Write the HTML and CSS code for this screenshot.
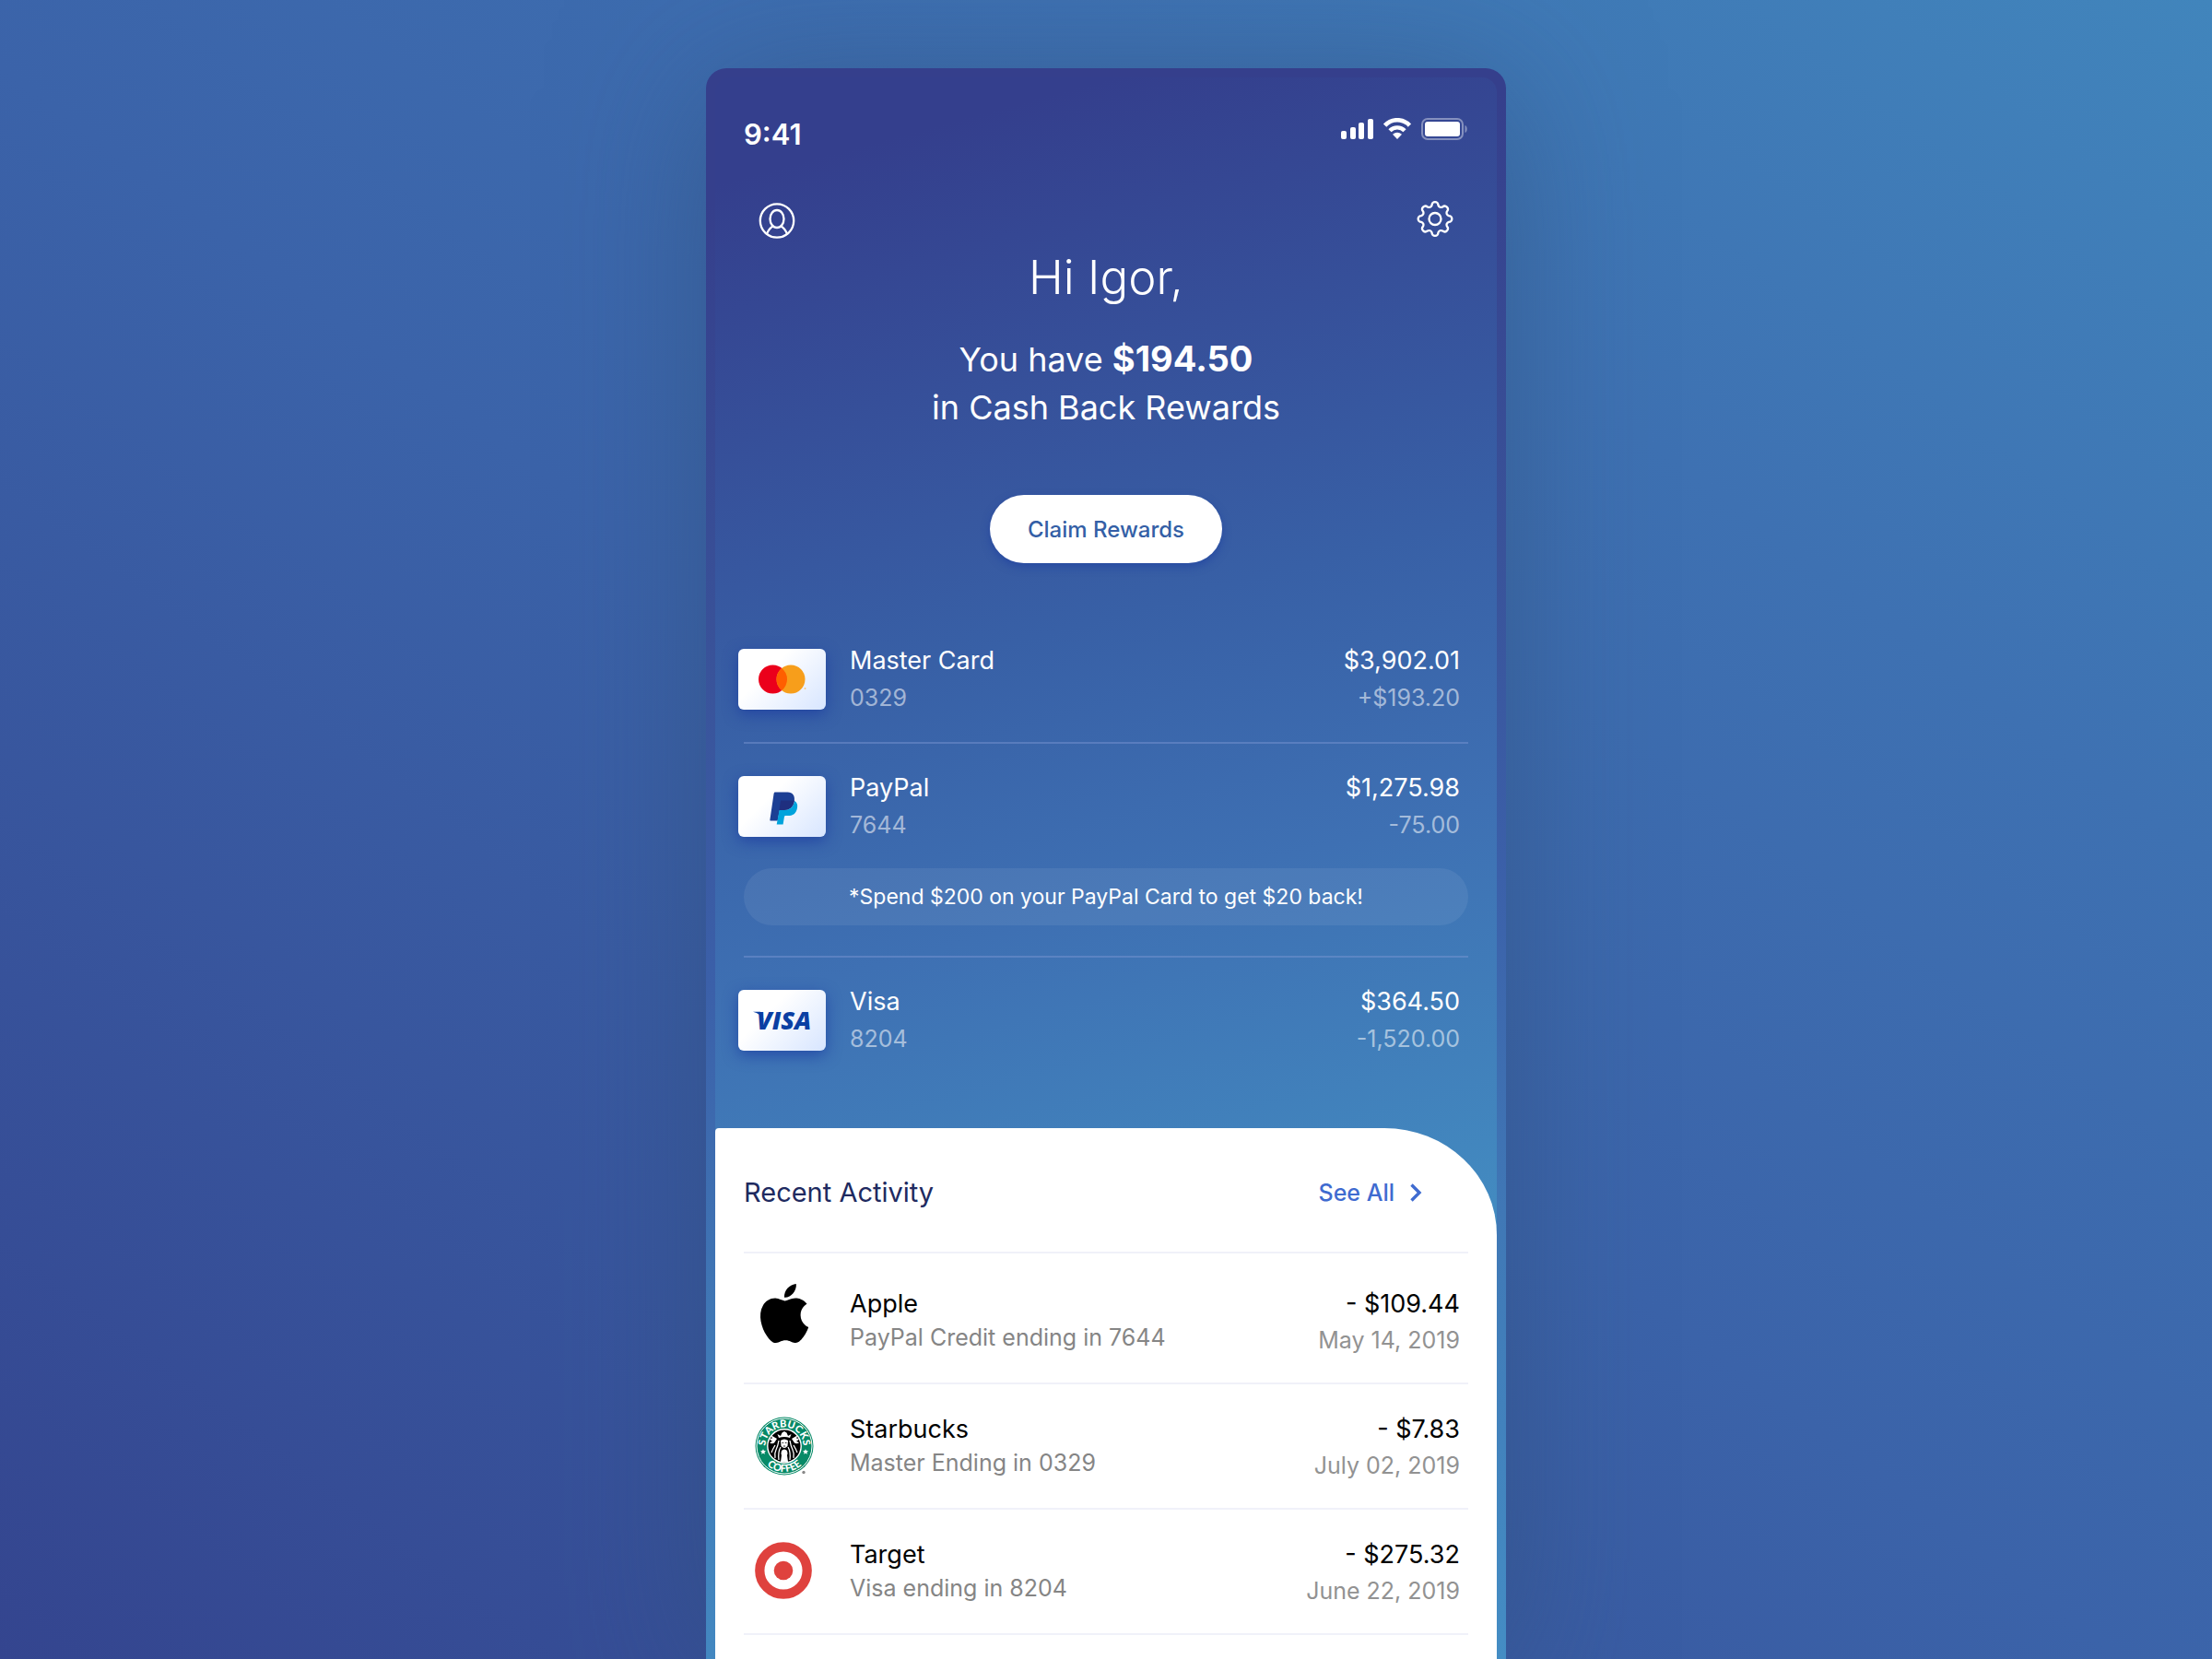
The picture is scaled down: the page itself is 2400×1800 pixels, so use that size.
FILE: index.html
```html
<!DOCTYPE html>
<html lang="en">
<head>
<meta charset="utf-8">
<meta name="viewport" content="width=device-width, initial-scale=1">
<title>Cash Back Rewards</title>
<link rel="stylesheet" href="styles.css">
</head>
<body>
<main class="phone">
  <div class="screen">
    <header class="top">
      <div class="status">
        <span class="clock">9:41</span>
        <svg class="status-icons" width="138" height="24" viewBox="0 0 138 24" fill="#fff" aria-hidden="true">
          <rect x="0" y="14" width="6" height="9" rx="2"/>
          <rect x="10" y="10" width="6" height="13" rx="2"/>
          <rect x="19" y="5" width="6" height="18" rx="2"/>
          <rect x="29" y="1" width="6" height="22" rx="2"/>
          <path d="M47.600 8.100A18.200 18.200 0 0 1 74.400 8.100" fill="none" stroke="#fff" stroke-width="4.600"/>
          <path d="M53 13.800A11 11 0 0 1 69 13.800" fill="none" stroke="#fff" stroke-width="4.400"/>
          <path d="M61 23l-5-5.200q5-4.200 10 0z"/>
          <rect x="88" y="1" width="44" height="22" rx="6" fill="none" stroke="#fff" stroke-width="2" opacity=".4"/>
          <rect x="91" y="4" width="38" height="16" rx="3"/>
          <path d="M134.500 8c3 1 3 7 0 8z" opacity=".4"/>
        </svg>
      </div>
      <div class="toolbar">
        <button class="icon-button" type="button" aria-label="Profile">
          <svg width="40" height="40" viewBox="0 0 40 40" fill="none" stroke="#fff" stroke-width="2.300">
            <circle cx="20" cy="21.500" r="18.200"/>
            <ellipse cx="20" cy="19.500" rx="7.500" ry="9.500"/>
            <path d="M9 35.700Q11.500 29.800 16 27.300M31 35.700Q28.500 29.800 24 27.300"/>
          </svg>
        </button>
        <button class="icon-button" type="button" aria-label="Settings">
          <svg width="40" height="40" viewBox="-20 -19.500 40 40" fill="none" stroke="#fff" stroke-width="2.300">
            <path d="M14.910-3.440A3.440 3.440 0 0 1 14.910 3.440A3.200 3.200 0 0 0 12.970 8.110A3.440 3.440 0 0 1 8.110 12.970A3.200 3.200 0 0 0 3.440 14.910A3.440 3.440 0 0 1-3.440 14.910A3.200 3.200 0 0 0-8.110 12.970A3.440 3.440 0 0 1-12.970 8.110A3.200 3.200 0 0 0-14.910 3.440A3.440 3.440 0 0 1-14.910-3.440A3.200 3.200 0 0 0-12.970-8.110A3.440 3.440 0 0 1-8.110-12.970A3.200 3.200 0 0 0-3.440-14.910A3.440 3.440 0 0 1 3.440-14.910A3.200 3.200 0 0 0 8.110-12.970A3.440 3.440 0 0 1 12.970-8.110A3.200 3.200 0 0 0 14.910-3.440z"/>
            <circle r="6.500"/>
          </svg>
        </button>
      </div>
      <h1 class="greeting">Hi Igor,</h1>
      <p class="summary">You have <strong>$194.50</strong><br>in Cash Back Rewards</p>
      <button class="claim" type="button">Claim Rewards</button>
    </header>

    <ul class="accounts">
      <li class="account">
        <div class="account-row">
          <svg class="card" width="95" height="66" viewBox="0 0 95 66" aria-hidden="true">
            <circle cx="37.500" cy="33" r="15.500" fill="#eb001b"/>
            <circle cx="57" cy="33" r="15.500" fill="#f79e1b"/>
            <path d="M47.250 20.950a15.500 15.500 0 0 1 0 24.100a15.500 15.500 0 0 1 0-24.100z" fill="#ff5f00"/>
            <circle cx="72.500" cy="43" r="1" fill="#f9c77c"/>
          </svg>
          <div class="info"><div class="name">Master Card</div><div class="detail">0329</div></div>
          <div class="figures"><div class="name">$3,902.01</div><div class="detail">+$193.20</div></div>
        </div>
      </li>
      <li class="account">
        <div class="account-row">
          <svg class="card" width="95" height="66" viewBox="0 0 95 66" aria-hidden="true">
            <path d="M40 17.500h13.500c5.500 0 8.300 4 7.300 9.500-1.200 7-5.300 10-11.500 10h-4.300l-2.300 11.500h-7.700q-.8 0-.6-1l4.200-28.600q.3-1.400 1.400-1.400z" fill="#1c3f94"/>
            <path d="M61 27c2.600 1.400 3.700 4 3 7.400-1.100 6.200-4.600 8.600-10.500 8.600h-2.200q-1.100 0-1.300 1l-1.400 8.600h-6.900l2.900-15.600h4.700c6.200 0 10.500-3 11.700-10z" fill="#00a3dc"/>
            <path d="M46 26.500h15q-1.800 10.500-11.500 10.500h-5z" fill="#1f2f7f"/>
          </svg>
          <div class="info"><div class="name">PayPal</div><div class="detail">7644</div></div>
          <div class="figures"><div class="name">$1,275.98</div><div class="detail">-75.00</div></div>
        </div>
        <p class="promo">*Spend $200 on your PayPal Card to get $20 back!</p>
      </li>
      <li class="account">
        <div class="account-row">
          <svg class="card" width="95" height="66" viewBox="0 0 95 66" aria-hidden="true">
            <text class="visa-mark" x="20" y="43">VISA</text>
            <path d="M16 23.700h8l4 9q-4-7-12-9z" fill="#0a3fa3"/>
          </svg>
          <div class="info"><div class="name">Visa</div><div class="detail">8204</div></div>
          <div class="figures"><div class="name">$364.50</div><div class="detail">-1,520.00</div></div>
        </div>
      </li>
    </ul>

    <section class="sheet">
      <div class="sheet-head">
        <h2 class="sheet-title">Recent Activity</h2>
        <a class="see-all" href="#">See All
          <svg width="14" height="20" viewBox="0 0 14 20" fill="none" stroke="#3f6bd0" stroke-width="3.400" aria-hidden="true"><path d="M2.500 1.500L11 10l-8.500 8.500"/></svg>
        </a>
      </div>
      <ul class="activity">
        <li class="entry entry-first">
          <svg class="logo" width="88" height="74" viewBox="0 0 88 74" aria-hidden="true">
            <path transform="translate(12.100 -3) scale(2.667)" d="M12.152 6.896c-.948 0-2.415-1.078-3.960-1.040-2.040.027-3.910 1.183-4.961 3.014-2.117 3.675-.546 9.103 1.519 12.090 1.013 1.454 2.208 3.090 3.792 3.039 1.520-.065 2.090-.987 3.935-.987 1.831 0 2.350.987 3.960.948 1.637-.026 2.676-1.480 3.676-2.948 1.156-1.688 1.636-3.325 1.662-3.415-.039-.013-3.182-1.221-3.220-4.857-.026-3.040 2.480-4.494 2.597-4.559-1.429-2.090-3.623-2.324-4.390-2.376-2-.156-3.675 1.090-4.610 1.090zM15.530 3.830c.843-1.012 1.400-2.427 1.245-3.830-1.207.052-2.662.805-3.532 1.818-.780.896-1.454 2.338-1.273 3.714 1.338.104 2.715-.688 3.559-1.701"/>
          </svg>
          <div class="info"><div class="name">Apple</div><div class="detail">PayPal Credit ending in 7644</div></div>
          <div class="figures"><div class="name">- $109.44</div><div class="detail date">May 14, 2019</div></div>
        </li>
        <li class="entry">
          <svg class="logo" width="88" height="74" viewBox="-44 -37 88 74" aria-hidden="true">
            <defs>
              <path id="ring-top" d="M-20.500 0A20.500 20.500 0 0 1 20.500 0"/>
              <path id="ring-bottom" d="M-28 0A28 28 0 0 0 28 0"/>
            </defs>
            <circle r="31.500" fill="#078a67"/>
            <circle r="30" fill="none" stroke="#fff" stroke-width="1"/>
            <circle r="18.200" fill="#000" stroke="#fff" stroke-width="1.400"/>
            <text class="ring-text"><textPath href="#ring-top" startOffset="50%">STARBUCKS</textPath></text>
            <text class="ring-text"><textPath href="#ring-bottom" startOffset="50%">COFFEE</textPath></text>
            <path id="star" d="M-23 3.200l.9 1.900 2.100.2-1.600 1.400.5 2-1.900-1-1.900 1 .5-2-1.600-1.400 2.100-.2z" fill="#fff"/>
            <use href="#star" x="46"/>
            <g fill="#fff">
              <path d="M-6-9l-1.500-4 3.500 2 1.500-3.500L0-16l2.500 1.500L4-11l3.500-2L6-9Q0-11-6-9z"/>
              <path d="M-4-6Q0-9 4-6L3.500 0Q0 4-3.500 0z"/>
              <path d="M-3 5Q0 2 3 5q1 3 0 5l1 7Q0 18-4 17l1-7q-1-2 0-5z"/>
              <path d="M-8-8l-6-3.500q0 2 1 3l-3 .5q1 2 3 2.500l-3 2q3 1.500 5 0zM8-8l6-3.500q0 2-1 3l3 .5q-1 2-3 2.500l3 2q-3 1.500-5 0z"/>
            </g>
            <path d="M-6-6Q-7 0-9 4t-1 9M-4 1Q-7 6-6 15M6-6Q7 0 9 4t1 9M4 1Q7 6 6 15M-10-1q-3 5-4 8M10-1q3 5 4 8" fill="none" stroke="#fff" stroke-width="1.300"/>
            <path d="M-2.500-3.500h1.700M.8-3.500h1.700M-1.200 0h2.400" stroke="#000" stroke-width=".8"/>
            <circle cx="21" cy="28.500" r="1.700" fill="#888"/>
          </svg>
          <div class="info"><div class="name">Starbucks</div><div class="detail">Master Ending in 0329</div></div>
          <div class="figures"><div class="name">- $7.83</div><div class="detail date">July 02, 2019</div></div>
        </li>
        <li class="entry">
          <svg class="logo" width="88" height="74" viewBox="0 0 88 74" aria-hidden="true">
            <circle cx="43" cy="36" r="25.700" fill="none" stroke="#df423e" stroke-width="10.300"/>
            <circle cx="43" cy="36" r="10.300" fill="#df423e"/>
          </svg>
          <div class="info"><div class="name">Target</div><div class="detail">Visa ending in 8204</div></div>
          <div class="figures"><div class="name">- $275.32</div><div class="detail date">June 22, 2019</div></div>
        </li>
      </ul>
    </section>
  </div>
</main>
</body>
</html>
```
FILE: styles.css
```css
* {
  box-sizing: border-box;
}

body {
  margin: 0;
  min-height: 100vh;
  padding-top: 74px;
  display: flex;
  flex-direction: column;
  align-items: center;
  overflow-x: hidden;
  font-family: Inter, "Liberation Sans", sans-serif;
  color: #fff;
  background: linear-gradient(to top right, #34458f, #3b63a9 48%, #3e71b2 74%, #4185bc);
}

h1,
h2,
p,
ul {
  margin: 0;
  padding: 0;
  font-weight: 400;
}

ul {
  list-style: none;
}

svg {
  display: block;
}

button {
  border: 0;
  padding: 0;
  font-family: inherit;
  cursor: pointer;
}

.phone {
  flex: 1;
  display: flex;
  width: 100%;
  max-width: 868px;
  padding: 10px 10px 0;
  border-radius: 22px 22px 0 0;
  background: linear-gradient(172deg, #353f8c 8%, #395299 34%, #3b60a9 54%, #4078b6 74%, #448dc4);
  box-shadow: 0 20px 160px rgba(48, 78, 120, .55);
}

.screen {
  flex: 1;
  display: flex;
  flex-direction: column;
  min-width: 0;
  border-radius: 16px 16px 0 0;
  background: linear-gradient(165deg, #343f8d 6%, #3860a6 36%, #3e70b3 52%, #438cc1 76%);
}

.top {
  display: flex;
  flex-direction: column;
  align-items: center;
  padding: 44px 31px 0;
}

.status {
  align-self: stretch;
  display: flex;
  justify-content: space-between;
  align-items: flex-start;
}

.clock {
  font-size: 31px;
  line-height: 36px;
  font-weight: 600;
}

.toolbar {
  align-self: stretch;
  display: flex;
  justify-content: space-between;
  margin-top: 54px;
  padding: 0 16px;
}

.icon-button {
  width: 40px;
  height: 40px;
  background: none;
}

.icon-button svg {
  overflow: visible;
}

.greeting {
  margin-top: 13px;
  font-size: 51px;
  line-height: 60px;
  font-weight: 300;
}

.summary {
  margin-top: 33px;
  font-size: 36px;
  line-height: 52px;
  text-align: center;
}

.summary strong {
  font-size: 38px;
  line-height: 36px;
  font-weight: 700;
}

.claim {
  width: 252px;
  height: 74px;
  margin-top: 69px;
  border-radius: 37px;
  font-size: 24px;
  font-weight: 500;
  color: #345fa6;
  background: #fff;
  box-shadow: 0 4px 10px rgba(28, 62, 160, .6);
}

.accounts {
  margin-top: 58px;
  padding: 0 31px 49px;
}

.account {
  padding: 28px 0;
}

.account + .account {
  border-top: 2px solid rgba(130, 155, 215, .42);
}

.account-row {
  display: grid;
  grid-template-columns: 115px 1fr auto;
  align-items: center;
  padding-right: 9px;
}

.card {
  margin-left: -6px;
  border-radius: 6px;
  background: linear-gradient(135deg, #fff 35%, #d7e5ff);
  box-shadow: 0 5px 16px rgba(24, 56, 160, .65);
}

.visa-mark {
  font: italic 800 27px "Open Sans", sans-serif;
  fill: #0a3fa3;
}

.name {
  font-size: 27px;
  line-height: 40px;
}

.detail {
  font-size: 25px;
  line-height: 40px;
  color: rgba(255, 255, 255, .55);
}

.figures {
  text-align: right;
}

.promo {
  margin: 27px 0 5px;
  border-radius: 31px;
  font-size: 23px;
  line-height: 62px;
  text-align: center;
  background: rgba(255, 255, 255, .07);
}

.account:first-child {
  margin-top: -28px;
  padding-top: 28px;
}

.accounts {
  padding-top: 28px;
}

.sheet {
  flex: 1;
  padding: 0 31px;
  border-radius: 4px 122px 0 0 / 4px 116px 0 0;
  color: #000;
  background: #fff;
}

.sheet-head {
  display: flex;
  justify-content: space-between;
  align-items: center;
  height: 136px;
  padding: 5px 50px 0 0;
  border-bottom: 2px solid #f0f1f9;
}

.sheet-title {
  font-size: 29px;
  color: #202a60;
}

.see-all {
  display: flex;
  align-items: center;
  gap: 16px;
  font-size: 25px;
  font-weight: 500;
  color: #3f6bd0;
  text-decoration: none;
}

.entry {
  display: grid;
  grid-template-columns: 115px 1fr auto;
  align-items: start;
  padding: 30px 9px 25px 0;
  border-bottom: 2px solid #f0f1f9;
}

.entry-first {
  padding-top: 36px;
}

.logo {
  overflow: visible;
}

.entry .name,
.entry .detail {
  line-height: 37px;
}

.entry .detail {
  color: #858585;
}

.entry .date {
  line-height: 42px;
  color: #929292;
}

.ring-text {
  font: 900 11px Lato, sans-serif;
  fill: #fff;
  text-anchor: middle;
}
```
